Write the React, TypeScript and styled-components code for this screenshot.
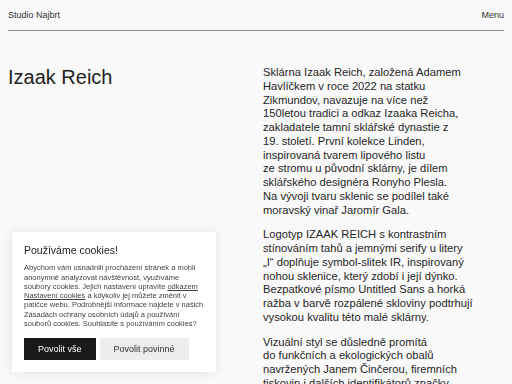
import React from 'react';
import styled, { createGlobalStyle } from 'styled-components';

const GlobalStyle = createGlobalStyle`
    html, body {
        margin: 0;
        padding: 0;
        background: #f9f9f9;
        overflow: hidden;
    }
    body {
        font-family: "Liberation Sans", Arial, sans-serif;
        color: #222222;
    }
`;

const Header = styled.header`
    margin: 0 8px;
    padding: 10px 0 9px;
    border-bottom: 1px solid #8c8c8c;
    display: flex;
    justify-content: space-between;
    align-items: center;
`;

const HeaderLink = styled.a`
    font-size: 9px;
    line-height: 11px;
    color: #333333;
    text-decoration: none;
`;

const Main = styled.main`
    display: grid;
    grid-template-columns: 1fr 1fr;
    column-gap: 14px;
    padding: 34px 8px 0;
`;

const Title = styled.h1`
    margin: 0;
    font-size: 20px;
    line-height: 24px;
    font-weight: 400;
    color: #222222;
`;

const Article = styled.div`
    max-width: 211px;
    padding-top: 1px;
`;

const Paragraph = styled.p`
    margin: 0 0 11px;
    font-size: 11.2px;
    line-height: 13.75px;
    color: #262626;
`;

const CookieBox = styled.div`
    position: fixed;
    left: 12px;
    bottom: 12px;
    width: 180px;
    padding: 12px;
    background: #ffffff;
    box-shadow: 0 0 10px rgba(0, 0, 0, 0.1);
`;

const CookieTitle = styled.h2`
    margin: 0 0 6px;
    font-size: 10.5px;
    line-height: 13px;
    font-weight: 400;
    color: #222222;
`;

const CookieText = styled.p`
    margin: 0 0 10px;
    font-size: 7.5px;
    line-height: 9.25px;
    color: #444444;

    a {
        color: inherit;
        text-decoration: underline;
    }
`;

const Buttons = styled.div`
    display: flex;
    gap: 4px;
`;

const Button = styled.button<{ $primary?: boolean }>`
    height: 22px;
    padding: 0 14px;
    border: none;
    font-family: inherit;
    font-size: 9px;
    background: ${ p => p.$primary ? '#1a1a1a' : '#ececec' };
    color: ${ p => p.$primary ? '#ffffff' : '#333333' };
    cursor: pointer;
`;

export default function App() {
    return (
        <>
            <GlobalStyle/>
            <Header>
                <HeaderLink href="#">Studio Najbrt</HeaderLink>
                <HeaderLink href="#">Menu</HeaderLink>
            </Header>
            <Main>
                <Title>Izaak Reich</Title>
                <Article>
                    <Paragraph>
                        Sklárna Izaak Reich, založená Adamem Havlíčkem v roce 2022 na statku Zikmundov,
                        navazuje na více než 150letou tradici a odkaz Izaaka Reicha, zakladatele tamní
                        sklářské dynastie z 19.{'\u00a0'}století. První kolekce Linden, inspirovaná tvarem
                        lipového listu ze{'\u00a0'}stromu u původní sklárny, je dílem sklářského designéra
                        Ronyho Plesla. Na{'\u00a0'}vývoji tvaru sklenic se podílel také moravský vinař
                        Jaromír Gala.
                    </Paragraph>
                    <Paragraph>
                        Logotyp IZAAK REICH s kontrastním stínováním tahů a jemnými serify u litery „I“
                        doplňuje symbol-slitek IR, inspirovaný nohou sklenice, který zdobí i její dýnko.
                        Bezpatkové písmo Untitled Sans a horká ražba v barvě rozpálené skloviny podtrhují
                        vysokou kvalitu této malé sklárny.
                    </Paragraph>
                    <Paragraph>
                        Vizuální styl se důsledně promítá do{'\u00a0'}funkčních a ekologických obalů
                        navržených Janem Činčerou, firemních tiskovin i dalších identifikátorů značky.
                    </Paragraph>
                </Article>
            </Main>
            <CookieBox>
                <CookieTitle>Používáme cookies!</CookieTitle>
                <CookieText>
                    Abychom vám usnadnili procházení stránek a mohli anonymně analyzovat návštěvnost,
                    využíváme soubory cookies. Jejich nastavení upravíte <a href="#">odkazem Nastavení
                    cookies</a> a kdykoliv jej můžete změnit v patičce webu. Podrobnější informace
                    najdete v našich Zásadách ochrany osobních údajů a používání souborů cookies.
                    Souhlasíte s používáním cookies?
                </CookieText>
                <Buttons>
                    <Button $primary>Povolit vše</Button>
                    <Button>Povolit povinné</Button>
                </Buttons>
            </CookieBox>
        </>
    );
}
